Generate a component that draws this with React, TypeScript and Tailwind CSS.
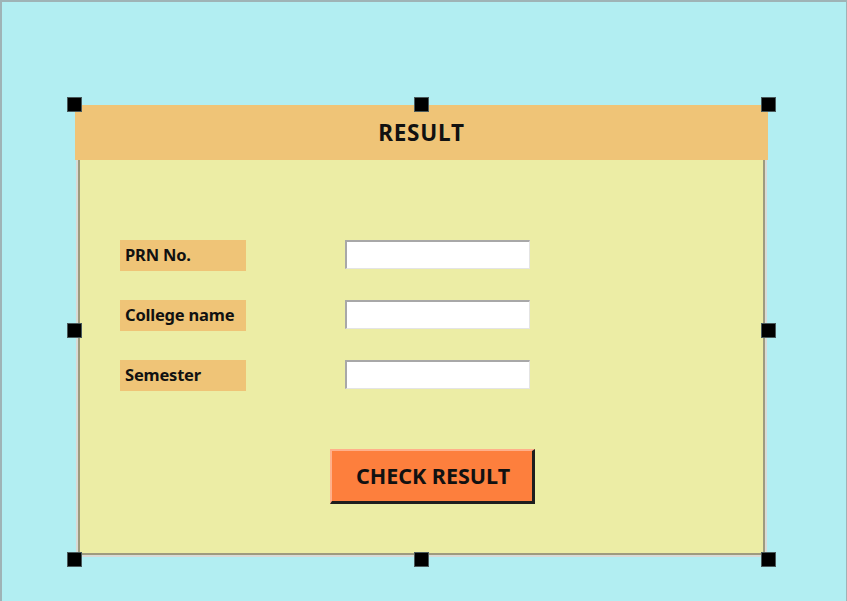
const FONT = { fontFamily: '"Noto Sans", "Open Sans", sans-serif' }

const FIELDS = ['PRN No.', 'College name', 'Semester']

function Handle({ className }: { className: string }) {
  return <div className={`absolute w-[15px] h-[15px] bg-black border border-[#4a5a5c] ${className}`} />
}

export default function App() {
  return (
    <div className="w-[847px] h-[601px] bg-[#b2eef2] border-l-2 border-t-2 border-r border-[#9fb3b6] overflow-hidden" style={FONT}>
      <div className="pl-[73px] pt-[103px]">
        <div className="relative w-[693px] h-[454px]">
          {/* title bar */}
          <div className="h-[55px] bg-[#efc477] flex items-center justify-center">
            <span className="text-[22.5px] font-bold text-[#111] tracking-[0.8px]">RESULT</span>
          </div>

          {/* form panel */}
          <div className="mx-[1px] h-[397px] bg-[#d9dad6] px-[2px] pb-[2px]">
            <div className="h-full bg-[#ecedA5] border-l-2 border-r-2 border-b-2 border-[#9d9b7f] pl-[40px] pt-[80px]">
              <div className="flex flex-col gap-[29px]">
                {FIELDS.map(f => (
                  <div key={f} className="flex items-start gap-[99px]">
                    <div className="w-[126px] h-[31px] bg-[#efc477] flex items-center pl-[5px] text-[16.5px] font-bold text-[#111] tracking-[-0.2px]">
                      {f}
                    </div>
                    <div className="w-[185px] h-[29px] bg-white border-t-2 border-l-2 border-[#a8a8a8] border-b border-r border-b-[#e4e4e4] border-r-[#e4e4e4]" />
                  </div>
                ))}
              </div>
              <div className="mt-[58px] ml-[210px]">
                <button className="w-[205px] h-[55px] bg-[#fd7f3d] border-t-2 border-l-2 border-[#ffb08a] border-b-[3px] border-r-[3px] border-b-[#1e1e1e] border-r-[#1e1e1e] text-[21.5px] font-bold text-[#111] flex items-center justify-center pl-[2px]">
                  CHECK RESULT
                </button>
              </div>
            </div>
          </div>

          {/* selection handles */}
          <Handle className="-left-[8px] -top-[8px]" />
          <Handle className="left-[339px] -top-[8px]" />
          <Handle className="-right-[8px] -top-[8px]" />
          <Handle className="-left-[8px] top-[218px]" />
          <Handle className="-right-[8px] top-[218px]" />
          <Handle className="-left-[8px] -bottom-[8px]" />
          <Handle className="left-[339px] -bottom-[8px]" />
          <Handle className="-right-[8px] -bottom-[8px]" />
        </div>
      </div>
    </div>
  )
}
